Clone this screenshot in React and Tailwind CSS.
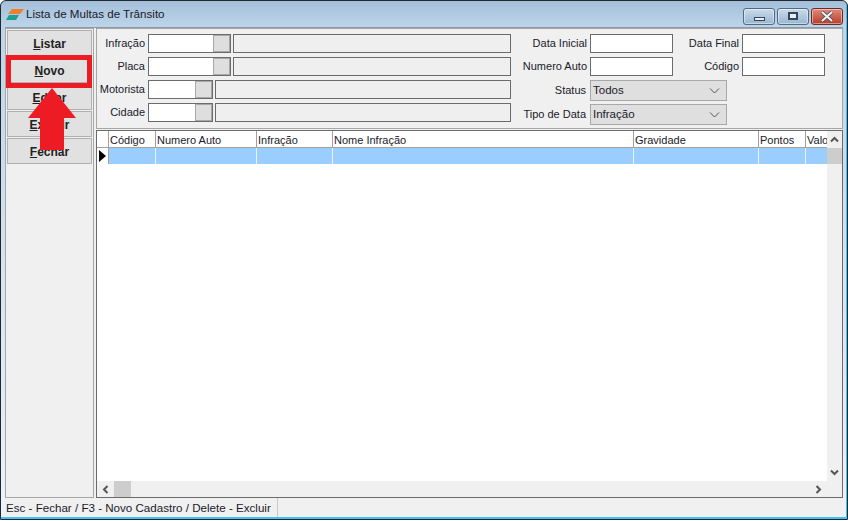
const sideButtons = [
  { first: 'L', rest: 'istar' },
  { first: 'N', rest: 'ovo' },
  { first: 'E', rest: 'ditar' },
  { first: 'E', rest: 'xcluir' },
  { first: 'F', rest: 'echar' },
];

const columns = [
  { label: 'Código', w: 'w-[47px]' },
  { label: 'Numero Auto', w: 'w-[101px]' },
  { label: 'Infração', w: 'w-[76px]' },
  { label: 'Nome Infração', w: 'w-[301px]' },
  { label: 'Gravidade', w: 'w-[125px]' },
  { label: 'Pontos', w: 'w-[47px]' },
  { label: 'Valo', w: 'w-[22px]' },
];

function Label({ children, w, extra = 'pr-[3px]' }) {
  return <div className={`${w} shrink-0 text-right leading-[19px] whitespace-nowrap ${extra}`}>{children}</div>;
}

function Input({ w }) {
  return <div className={`${w} h-[19px] shrink-0 bg-white border border-[#6b6b6b]`}></div>;
}

function Lookup({ wide }) {
  return (
    <div className="flex gap-[2px]">
      <div className={`${wide ? 'w-[83px]' : 'w-[65px]'} h-[19px] flex bg-white border border-[#6b6b6b]`}>
        <div className="flex-1"></div>
        <div className="w-[17px] bg-[#dedede] border border-[#a8a8a8]"></div>
      </div>
      <div className={`${wide ? 'w-[278px]' : 'w-[296px]'} h-[19px] bg-[#efefef] border border-[#6b6b6b]`}></div>
    </div>
  );
}

function Combo({ value, extra }) {
  return (
    <div className={`w-[137px] h-[21px] shrink-0 flex items-center justify-between pl-[2px] pr-[6px] bg-[#dfdfdf] border border-[#a8a8a8] ${extra}`}>
      <span className="text-[11.5px] pt-[1px]">{value}</span>
      <svg width="11" height="6" viewBox="0 0 11 6"><path d="M1 0.5 L5.5 5 L10 0.5" fill="none" stroke="#555555" strokeWidth="1" /></svg>
    </div>
  );
}

function WinButton({ color, children }) {
  return (
    <div className={`w-[32px] h-[17px] flex items-center justify-center rounded-[3px] border shadow-[inset_0_0_0_1px_rgba(255,255,255,0.45)] ${color}`}>
      {children}
    </div>
  );
}

export default function App() {
  return (
    <div className="relative w-[848px] h-[521px] bg-white overflow-hidden font-['Liberation_Sans',sans-serif] text-[11px] text-[#1a1a2a]">
      <div className="w-[848px] h-[520px] flex flex-col rounded-t-[6px] border border-[#20282e] bg-gradient-to-b from-[#a3bfd8] via-[#bdd5ea] via-[5%] to-[#eaf4fb] pb-[3px] px-[4px] shadow-[inset_-1px_-2px_0_#45bdf0]">
        {/* Title bar */}
        <div className="h-[26px] shrink-0 flex items-center pl-[1px]">
          <svg width="18" height="13" viewBox="0 0 18 13" className="mr-[2px]">
            <path d="M6 1 H18 L14 6 H2 Z" fill="#ee7f2d" />
            <path d="M3 7 H13 L10 12 H0 Z" fill="#1f9d8f" />
          </svg>
          <span className="text-[11.6px]">Lista de Multas de Trânsito</span>
          <div className="ml-auto flex gap-[2px] mt-[4px]">
            <WinButton color="border-[#4e6a86] bg-gradient-to-b from-[#c9dbea] to-[#9ab6cf]">
              <div className="w-[11px] h-[4px] mt-[5px] bg-[#e8eef4] border border-[#33475a]"></div>
            </WinButton>
            <WinButton color="border-[#4e6a86] bg-gradient-to-b from-[#c9dbea] to-[#9ab6cf]">
              <div className="w-[10px] h-[8px] bg-[#e8eef4] border-2 border-[#33475a]"></div>
            </WinButton>
            <WinButton color="bg-gradient-to-b from-[#e08a78] to-[#b8392a] border-[#6e2a22]">
              <svg width="14" height="11" viewBox="0 0 14 11">
                <path d="M2 1 L12 10 M12 1 L2 10" stroke="#33475a" strokeWidth="3.6" />
                <path d="M2 1 L12 10 M12 1 L2 10" stroke="#f2f2f2" strokeWidth="2.2" />
              </svg>
            </WinButton>
          </div>
        </div>

        {/* Client area */}
        <div className="flex-1 min-h-0 flex flex-col bg-[#f0f0f0] border-t border-[#8a9aa8]">
          <div className="flex-1 min-h-0 flex gap-[2px]">
            {/* Side buttons */}
            <div className="w-[89px] shrink-0 flex flex-col gap-[1px] p-[1px] border border-[#a6a6a6]">
              {sideButtons.map((b, i) => (
                <div
                  key={i}
                  className="w-[85px] h-[26px] flex items-center justify-center pt-[2px] bg-[#e1e1e1] border border-[#b0b0b0] font-bold text-[12px] text-[#222222]"
                >
                  <span><span className="underline">{b.first}</span>{b.rest}</span>
                </div>
              ))}
            </div>

            <div className="flex-1 min-w-0 flex flex-col gap-[1px]">
              {/* Filters */}
              <div className="h-[101px] shrink-0 flex flex-col gap-[4px] pt-[5px] border border-[#a6a6a6]">
                <div className="flex h-[19px]">
                  <Label w="w-[51px]">Infração</Label>
                  <Lookup wide />
                  <Label w="w-[79px]">Data Inicial</Label>
                  <Input w="w-[83px]" />
                  <Label w="w-[69px]">Data Final</Label>
                  <Input w="w-[83px]" />
                </div>
                <div className="flex h-[19px]">
                  <Label w="w-[51px]">Placa</Label>
                  <Lookup wide />
                  <Label w="w-[79px]">Numero Auto</Label>
                  <Input w="w-[83px]" />
                  <Label w="w-[69px]">Código</Label>
                  <Input w="w-[83px]" />
                </div>
                <div className="flex h-[19px]">
                  <Label w="w-[51px]">Motorista</Label>
                  <Lookup />
                  <Label w="w-[79px]" extra="pr-[4px] pt-[1px]">Status</Label>
                  <Combo value="Todos" />
                </div>
                <div className="flex h-[19px]">
                  <Label w="w-[51px]">Cidade</Label>
                  <Lookup />
                  <Label w="w-[79px]" extra="pr-[4px] pt-[2px]">Tipo de Data</Label>
                  <Combo value="Infração" extra="mt-[1px]" />
                </div>
              </div>

              {/* Grid */}
              <div className="flex-1 min-h-0 flex flex-col border border-[#6b6b6b] bg-white">
                <div className="flex-1 min-h-0 flex">
                  <div className="flex-1 min-w-0 overflow-hidden">
                    <div className="flex h-[17px] border-b border-[#a0a0a0]">
                      <div className="w-[12px] shrink-0 border-r border-[#a0a0a0]"></div>
                      {columns.map((c) => (
                        <div key={c.label} className={`${c.w} shrink-0 pl-[1px] leading-[18px] border-r border-[#a0a0a0] last:border-r-0 whitespace-nowrap`}>
                          {c.label}
                        </div>
                      ))}
                    </div>
                    <div className="flex h-[16px]">
                      <div className="w-[12px] shrink-0 flex items-center justify-center bg-white border-r border-[#a0a0a0]">
                        <svg width="7" height="12" viewBox="0 0 7 12"><path d="M0 0 L7 6 L0 12 Z" fill="#000000" /></svg>
                      </div>
                      {columns.map((c) => (
                        <div key={c.label} className={`${c.w} shrink-0 bg-[#99ceff] border-r border-[#e8f4ff] last:border-r-0`}></div>
                      ))}
                    </div>
                  </div>
                  {/* Vertical scrollbar */}
                  <div className="w-[15px] shrink-0 flex flex-col bg-[#f0f0f0]">
                    <div className="h-[17px] flex items-center justify-center text-[#555555]">
                      <svg width="9" height="7" viewBox="0 0 9 7"><path d="M1 5.5 L4.5 2 L8 5.5" fill="none" stroke="currentColor" strokeWidth="2" /></svg>
                    </div>
                    <div className="h-[16px] bg-[#cdcdcd]"></div>
                    <div className="flex-1"></div>
                    <div className="h-[17px] flex items-center justify-center text-[#555555]">
                      <svg width="9" height="7" viewBox="0 0 9 7"><path d="M1 1.5 L4.5 5 L8 1.5" fill="none" stroke="currentColor" strokeWidth="2" /></svg>
                    </div>
                  </div>
                </div>
                {/* Horizontal scrollbar */}
                <div className="h-[16px] shrink-0 flex items-center bg-[#f0f0f0]">
                  <div className="w-[17px] flex items-center justify-center text-[#555555]">
                    <svg width="7" height="9" viewBox="0 0 7 9"><path d="M5.5 1 L2 4.5 L5.5 8" fill="none" stroke="currentColor" strokeWidth="2" /></svg>
                  </div>
                  <div className="w-[17px] h-full bg-[#cdcdcd]"></div>
                  <div className="flex-1"></div>
                  <div className="w-[17px] mr-[15px] flex items-center justify-center text-[#555555]">
                    <svg width="7" height="9" viewBox="0 0 7 9"><path d="M1.5 1 L5 4.5 L1.5 8" fill="none" stroke="currentColor" strokeWidth="2" /></svg>
                  </div>
                </div>
              </div>
            </div>
          </div>

          {/* Status bar */}
          <div className="h-[18px] shrink-0 flex items-center">
            <div className="w-[273px] pl-[1px] text-[11.6px] leading-[19px] border-r border-[#c8c8c8] whitespace-nowrap">Esc - Fechar / F3 - Novo Cadastro / Delete - Excluir</div>
          </div>
        </div>
      </div>

      {/* Annotation drawn over the form */}
      <div className="absolute left-[6px] top-[55px] w-[86px] h-[33px] border-[5px] border-[#ed1c24]"></div>
      <svg className="absolute left-[28px] top-[88px]" width="48" height="62" viewBox="0 0 48 62">
        <path d="M24 0 L48 30 H36 V62 H12 V30 H0 Z" fill="#ed1c24" />
      </svg>
    </div>
  );
}
